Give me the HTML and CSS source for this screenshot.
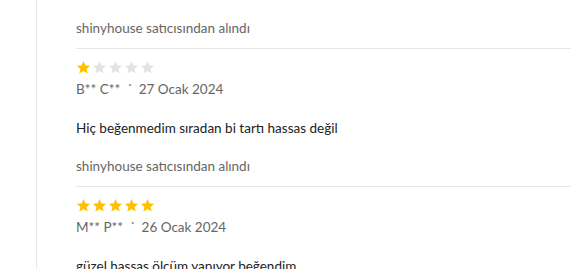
FILE: index.html
```html
<!DOCTYPE html>
<html lang="tr">
<head>
    <meta charset="UTF-8">
    <title>Değerlendirmeler</title>
    <link rel="stylesheet" href="styles.css">
</head>
<body>
    <div class="reviews">
        <div class="seller">shinyhouse satıcısından alındı</div>

        <div class="review">
            <div class="stars">
                <svg class="star full" viewBox="0 0 24 24"><path d="M12 1.5l3.1 7.1 7.6.6-5.8 5 1.8 7.5L12 17.7l-6.7 4 1.8-7.5-5.8-5 7.6-.6z"/></svg>
                <svg class="star" viewBox="0 0 24 24"><path d="M12 1.5l3.1 7.1 7.6.6-5.8 5 1.8 7.5L12 17.7l-6.7 4 1.8-7.5-5.8-5 7.6-.6z"/></svg>
                <svg class="star" viewBox="0 0 24 24"><path d="M12 1.5l3.1 7.1 7.6.6-5.8 5 1.8 7.5L12 17.7l-6.7 4 1.8-7.5-5.8-5 7.6-.6z"/></svg>
                <svg class="star" viewBox="0 0 24 24"><path d="M12 1.5l3.1 7.1 7.6.6-5.8 5 1.8 7.5L12 17.7l-6.7 4 1.8-7.5-5.8-5 7.6-.6z"/></svg>
                <svg class="star" viewBox="0 0 24 24"><path d="M12 1.5l3.1 7.1 7.6.6-5.8 5 1.8 7.5L12 17.7l-6.7 4 1.8-7.5-5.8-5 7.6-.6z"/></svg>
            </div>
            <div class="meta">
                <span>B** C**</span>
                <span class="dot">•</span>
                <span>27 Ocak 2024</span>
            </div>
            <p class="comment">Hiç beğenmedim sıradan bi tartı hassas değil</p>
            <div class="seller">shinyhouse satıcısından alındı</div>
        </div>

        <div class="review">
            <div class="stars">
                <svg class="star full" viewBox="0 0 24 24"><path d="M12 1.5l3.1 7.1 7.6.6-5.8 5 1.8 7.5L12 17.7l-6.7 4 1.8-7.5-5.8-5 7.6-.6z"/></svg>
                <svg class="star full" viewBox="0 0 24 24"><path d="M12 1.5l3.1 7.1 7.6.6-5.8 5 1.8 7.5L12 17.7l-6.7 4 1.8-7.5-5.8-5 7.6-.6z"/></svg>
                <svg class="star full" viewBox="0 0 24 24"><path d="M12 1.5l3.1 7.1 7.6.6-5.8 5 1.8 7.5L12 17.7l-6.7 4 1.8-7.5-5.8-5 7.6-.6z"/></svg>
                <svg class="star full" viewBox="0 0 24 24"><path d="M12 1.5l3.1 7.1 7.6.6-5.8 5 1.8 7.5L12 17.7l-6.7 4 1.8-7.5-5.8-5 7.6-.6z"/></svg>
                <svg class="star full" viewBox="0 0 24 24"><path d="M12 1.5l3.1 7.1 7.6.6-5.8 5 1.8 7.5L12 17.7l-6.7 4 1.8-7.5-5.8-5 7.6-.6z"/></svg>
            </div>
            <div class="meta">
                <span>M** P**</span>
                <span class="dot">•</span>
                <span>26 Ocak 2024</span>
            </div>
            <p class="comment">güzel hassas ölçüm yapıyor beğendim</p>
        </div>
    </div>
</body>
</html>
```

FILE: styles.css
```css
/* Genel */
body {
    margin: 0;
    font-family: Lato, "Open Sans", sans-serif;
    background: #fff;
    color: #333;
    overflow: hidden;
}

/* Yorum listesi */
.reviews {
    margin-left: 36px;
    border-left: 1px solid #e8e8e8;
    padding-left: 39px;
    min-height: 100vh;
}

.seller {
    padding: 18px 0 10px;
    font-size: 13.5px;
    line-height: 20px;
    color: #666;
    border-bottom: 1px solid #e6e6e6;
}

.review .seller {
    margin-top: 18px;
    padding-top: 0;
}

/* Yıldızlar */
.stars {
    display: flex;
    gap: 1px;
    margin-top: 11px;
    height: 15px;
}

.star {
    width: 15px;
    height: 15px;
    fill: #e4e4e4;
}

    .star.full {
        fill: #ffc000;
    }

/* Kullanıcı ve tarih */
.meta {
    display: flex;
    align-items: center;
    margin-top: 4px;
    font-size: 13.5px;
    line-height: 20px;
    color: #666;
}

.dot {
    font-size: 6px;
    line-height: 6px;
    align-self: flex-start;
    margin: 3px 7px 0 8px;
    color: #999;
}

.comment {
    margin: 19px 0 0;
    font-size: 13.5px;
    line-height: 20px;
    color: #222;
}
```
